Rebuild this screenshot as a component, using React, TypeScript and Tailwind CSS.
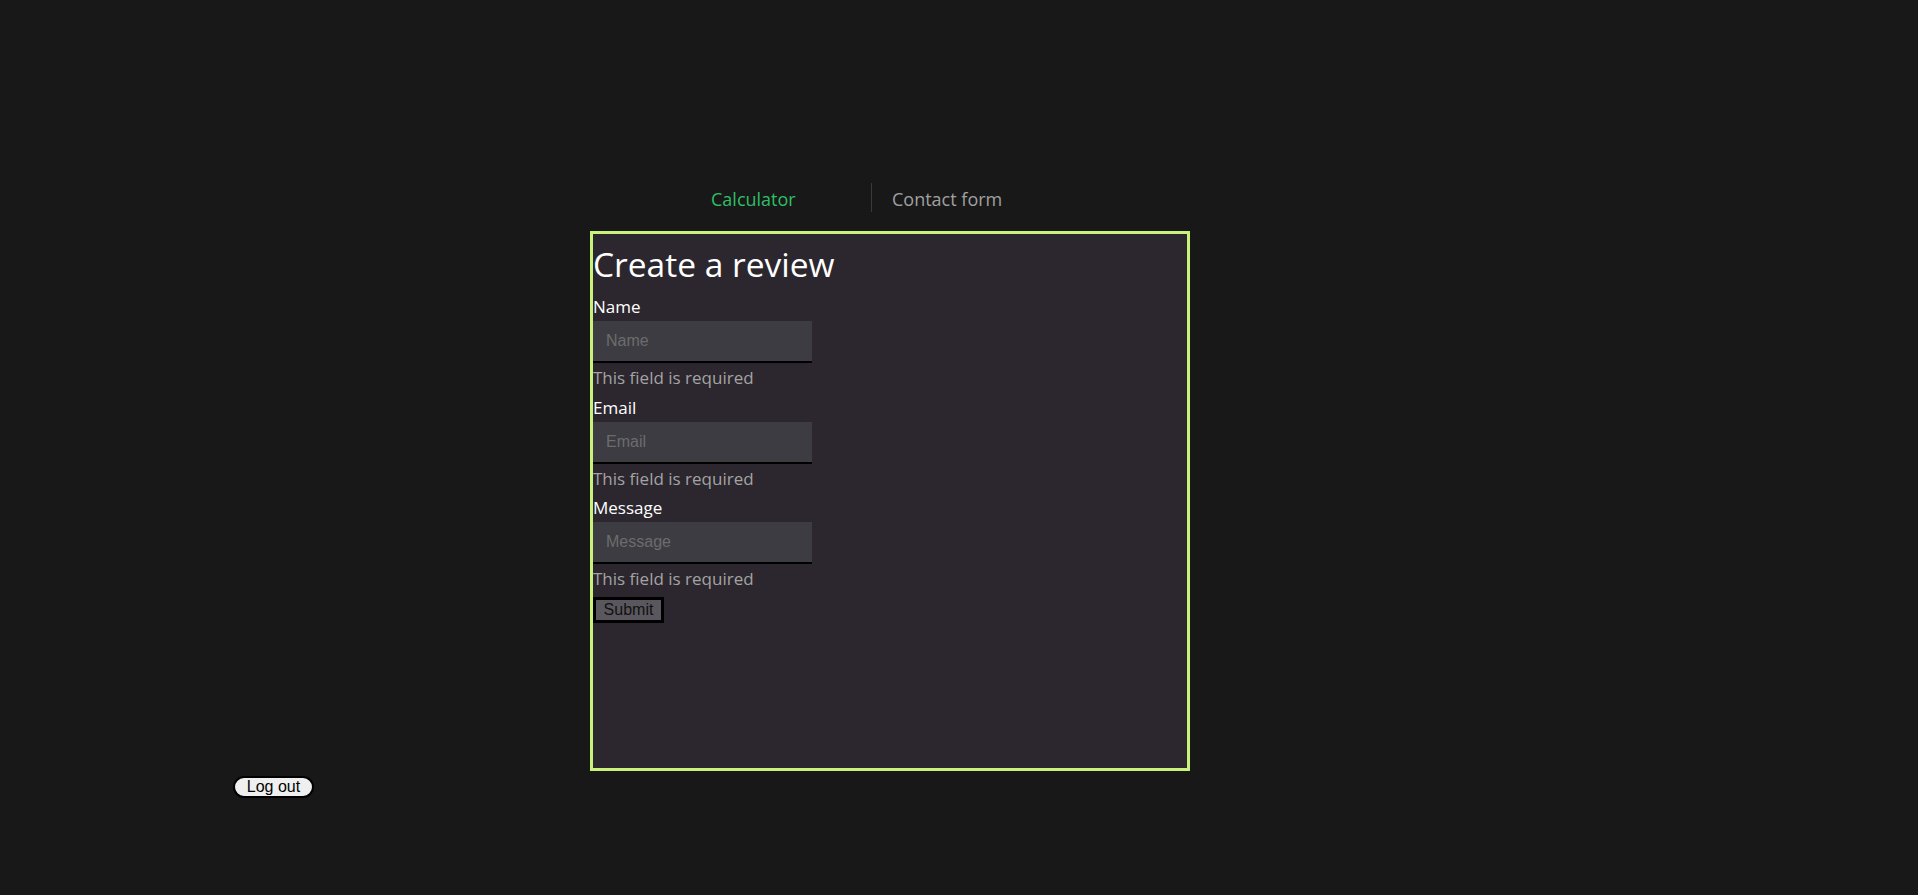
import React from "react";

const sans = { fontFamily: '"Open Sans", "Noto Sans", sans-serif' };

function Field({ label, placeholder }: { label: string; placeholder: string }) {
  return (
    <div className="flex flex-col mb-[4.5px]">
      <label className="block h-[24px] leading-[24px] text-[17px] text-white mb-[3px] pt-[1px]">{label}</label>
      <input
        placeholder={placeholder}
        className="w-[219px] h-[42px] bg-[#3d3c42] border-0 border-b-2 border-black pl-[13px] outline-none text-[16px] text-white placeholder:text-[#6c6c6c] font-['Liberation_Sans',Arial,sans-serif]"
      />
      <div className="h-[24px] leading-[24px] text-[17px] text-[#a3a3a3] mt-[3px]">This field is required</div>
    </div>
  );
}

export default function App() {
  return (
    <div className="min-h-screen bg-[#181818] pt-[183px]" style={sans}>
      <div className="pl-[590px]">
        <div className="flex items-start h-[29px]">
          <div className="w-[281px] h-[29px] pl-[121px] pt-[4px] leading-[24px] text-[18px] text-[#2fbf65]">Calculator</div>
          <div className="h-[29px] border-l border-[#3a3a3a] pl-[20px] pt-[4px] leading-[24px] text-[18px] text-[#a0a0a0]">Contact form</div>
        </div>
        <div className="mt-[19px] w-[600px] h-[540px] border-[3px] border-[#c9f27a] bg-[#2c272e]">
          <h1 className="mt-[10px] h-[40px] leading-[40px] text-[33.5px] text-white">Create a review</h1>
          <form className="mt-[10px] flex flex-col" onSubmit={(e) => e.preventDefault()}>
            <Field label="Name" placeholder="Name" />
            <Field label="Email" placeholder="Email" />
            <Field label="Message" placeholder="Message" />
            <div className="mt-[1px]">
              <button
                type="submit"
                className="w-[71px] h-[26px] border-[3px] border-black bg-[#5a585e] text-[16px] leading-[18px] text-[#111] font-['Liberation_Sans',Arial,sans-serif]"
              >
                Submit
              </button>
            </div>
          </form>
        </div>
      </div>
      <div className="pl-[233px] mt-[3px]">
        <button className="w-[81px] h-[22px] border-2 border-black rounded-full bg-[#efefef] text-[16px] leading-[18px] text-black font-['Liberation_Sans',Arial,sans-serif]">
          Log out
        </button>
      </div>
    </div>
  );
}
